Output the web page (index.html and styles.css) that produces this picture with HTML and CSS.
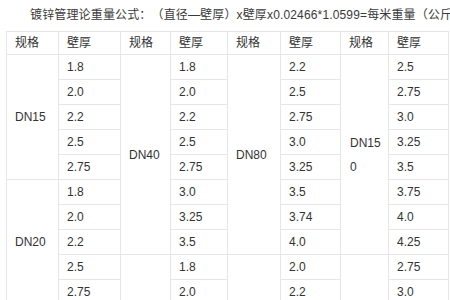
FILE: index.html
```html
<!DOCTYPE html>
<html lang="zh">
<head>
<meta charset="utf-8">
<link rel="stylesheet" href="styles.css">
</head>
<body>
<p class="title">镀锌管理论重量公式：（直径—壁厚）x壁厚x0.02466*1.0599=每米重量（公斤）</p>
<table class="spec">
  <colgroup>
    <col class="c1"><col class="c2"><col class="c3"><col class="c4"><col class="c5"><col class="c6"><col class="c7"><col class="c8">
  </colgroup>
  <thead>
    <tr><th>规格</th><th>壁厚</th><th>规格</th><th>壁厚</th><th>规格</th><th>壁厚</th><th>规格</th><th>壁厚</th></tr>
  </thead>
  <tbody>
    <tr><td rowspan="5">DN15</td><td>1.8</td><td rowspan="8">DN40</td><td>1.8</td><td rowspan="8">DN80</td><td>2.2</td><td rowspan="8" class="dn">DN150</td><td>2.5</td></tr>
    <tr><td>2.0</td><td>2.0</td><td>2.5</td><td>2.75</td></tr>
    <tr><td>2.2</td><td>2.2</td><td>2.75</td><td>3.0</td></tr>
    <tr><td>2.5</td><td>2.5</td><td>3.0</td><td>3.25</td></tr>
    <tr><td>2.75</td><td>2.75</td><td>3.25</td><td>3.5</td></tr>
    <tr><td rowspan="5">DN20</td><td>1.8</td><td>3.0</td><td>3.5</td><td>3.75</td></tr>
    <tr><td>2.0</td><td>3.25</td><td>3.74</td><td>4.0</td></tr>
    <tr><td>2.2</td><td>3.5</td><td>4.0</td><td>4.25</td></tr>
    <tr><td>2.5</td><td rowspan="8">DN50</td><td>1.8</td><td rowspan="8">DN100</td><td>2.0</td><td rowspan="8">DN200</td><td>2.75</td></tr>
    <tr><td>2.75</td><td>2.0</td><td>2.2</td><td>3.0</td></tr>
    <tr><td rowspan="6">DN25</td><td>2.0</td><td>2.2</td><td>2.5</td><td>3.25</td></tr>
    <tr><td>2.2</td><td>2.5</td><td>2.75</td><td>3.5</td></tr>
    <tr><td>2.5</td><td>2.75</td><td>3.0</td><td>3.75</td></tr>
    <tr><td>2.75</td><td>3.0</td><td>3.25</td><td>4.0</td></tr>
    <tr><td>3.0</td><td>3.25</td><td>3.5</td><td>4.25</td></tr>
    <tr><td>3.25</td><td>3.5</td><td>3.75</td><td>4.5</td></tr>
  </tbody>
</table>
</body>
</html>
```
FILE: styles.css
```css
html, body {
  margin: 0;
  padding: 0;
  background: #fff;
}
body {
  font-family: "Liberation Sans", Arial, "Noto Sans CJK SC", sans-serif;
  color: #333;
  overflow: hidden;
}
.title {
  margin: 0;
  height: 31px;
  padding-left: 30px;
  font-size: 12px;
  line-height: 31px;
  letter-spacing: 0.15px;
  white-space: nowrap;
  overflow: hidden;
  color: #3a3a3a;
  text-spacing-trim: space-all;
}
.spec {
  margin-left: 6px;
  width: 442px;
  table-layout: fixed;
  border-collapse: collapse;
  font-size: 12px;
}
.c1 { width: 52px; }
.c2 { width: 62px; }
.c3 { width: 50px; }
.c4 { width: 57px; }
.c5 { width: 53px; }
.c6 { width: 60px; }
.c7 { width: 48px; }
.c8 { width: 60px; }
.spec th, .spec td {
  border: 1px solid #e6e6e6;
  padding: 0 8px;
  text-align: left;
  vertical-align: middle;
  font-weight: normal;
  line-height: 24px;
  word-break: break-all;
}
.spec thead tr { height: 23px; }
.spec th { line-height: 21px; }
.spec tbody tr { height: 25px; }
.spec td.dn { padding: 0 2px 0 9px; }
```
